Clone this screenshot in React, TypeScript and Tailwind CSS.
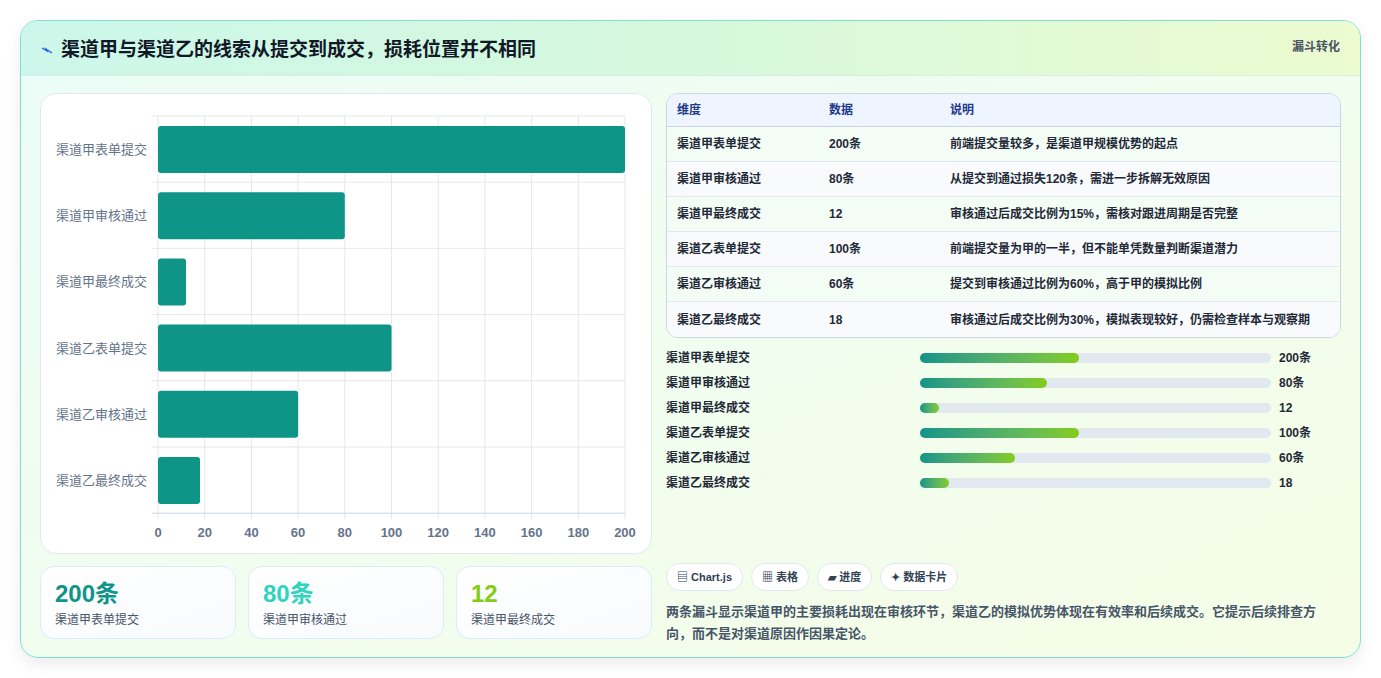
import React from "react";

const rows = [
  ["渠道甲表单提交", "200条", "前端提交量较多，是渠道甲规模优势的起点"],
  ["渠道甲审核通过", "80条", "从提交到通过损失120条，需进一步拆解无效原因"],
  ["渠道甲最终成交", "12", "审核通过后成交比例为15%，需核对跟进周期是否完整"],
  ["渠道乙表单提交", "100条", "前端提交量为甲的一半，但不能单凭数量判断渠道潜力"],
  ["渠道乙审核通过", "60条", "提交到审核通过比例为60%，高于甲的模拟比例"],
  ["渠道乙最终成交", "18", "审核通过后成交比例为30%，模拟表现较好，仍需检查样本与观察期"],
];
const vals = [200, 80, 12, 100, 60, 18];
const prog = [45.3, 36.2, 5.4, 45.3, 27, 8.2];

function Chart() {
  const x0 = 117, x1 = 584, y0 = 22, rh = 66.2;
  const sx = (v: number) => x0 + ((x1 - x0) * v) / 200;
  return (
    <svg width="611" height="460" className="block">
      {Array.from({ length: 11 }).map((_, i) => (
        <line key={i} x1={sx(i * 20)} x2={sx(i * 20)} y1={y0} y2={y0 + rh * 6 + 6} stroke="#e5e7eb" />
      ))}
      {Array.from({ length: 7 }).map((_, i) => (
        <line key={i} x1={x0 - 6} x2={x1} y1={y0 + rh * i} y2={y0 + rh * i} stroke={i === 6 ? "#cbd5e1" : "#e5e7eb"} />
      ))}
      {vals.map((v, i) => (
        <g key={i}>
          <rect x={x0} y={y0 + rh * i + 10} width={sx(v) - x0} height={47} rx={3} fill="#0f9488" />
          <text x={x0 - 11} y={y0 + rh * i + 38} textAnchor="end" fontSize="13" fill="#64748b" fontFamily="'Noto Sans CJK SC', sans-serif">{rows[i][0]}</text>
        </g>
      ))}
      {Array.from({ length: 11 }).map((_, i) => (
        <text key={i} x={sx(i * 20)} y={443} textAnchor="middle" fontSize="13" fontWeight="600" fill="#64748b" fontFamily="'Liberation Sans', sans-serif">{i * 20}</text>
      ))}
    </svg>
  );
}

export default function App() {
  return (
    <div className="w-[1381px] h-[678px] bg-white p-[20px] pb-[20px]" style={{ fontFamily: "'Liberation Sans','Noto Sans CJK SC',sans-serif" }}>
      <div className="w-[1341px] h-[638px] rounded-[18px] border border-[#7fe0cf] overflow-hidden bg-gradient-to-br from-[#ecfdf8] to-[#f5fde6] shadow-[0_6px_16px_rgba(0,0,0,0.08)] flex flex-col">
        <div className="h-[55px] flex items-start justify-between px-[20px] pt-[16px] bg-gradient-to-r from-[#ccf7ea] via-[#d6f8dc] to-[#ecfbd0] border-b border-[#d9efe6]">
          <div className="flex items-center gap-[8px]">
            <svg width="12" height="10" viewBox="0 0 12 10"><path d="M1 3 L6 6 L5 4 L11 8" stroke="#2563eb" strokeWidth="1.4" fill="none" /></svg>
            <h1 className="text-[19px] font-bold text-[#111827] leading-[26px]">渠道甲与渠道乙的线索从提交到成交，损耗位置并不相同</h1>
          </div>
          <span className="text-[12px] font-bold text-[#4b5563] mt-[1px]">漏斗转化</span>
        </div>
        <div className="flex gap-[14px] px-[19px] pt-[17px]">
          <div className="w-[612px] flex flex-col gap-[12px]">
            <div className="h-[461px] bg-white rounded-[16px] border border-[#e2e8f0]">
              <Chart />
            </div>
            <div className="flex gap-[12px]">
              {[["200条", "text-[#0f9488]"], ["80条", "text-[#2dd4bf]"], ["12", "text-[#84cc16]"]].map(([v, c], i) => (
                <div key={i} className="flex-1 h-[73px] rounded-[14px] border border-[#dbeafe] bg-gradient-to-br from-white to-[#f8fafc] px-[14px] pt-[12px]">
                  <div className={`text-[24px] font-bold leading-[30px] ${c}`}>{v}</div>
                  <div className="text-[12px] text-[#475569] mt-[2px]">{rows[i][0]}</div>
                </div>
              ))}
            </div>
          </div>
          <div className="w-[677px] flex flex-col">
            <div className="rounded-[12px] border border-[#cbd5e1] overflow-hidden bg-white text-[12px]">
              <div className="flex h-[33px] items-center bg-[#eef5ff] border-b border-[#cbd5e1] font-bold text-[#1e3a8a]">
                <div className="w-[162px] pl-[10px]">维度</div>
                <div className="w-[121px]">数据</div>
                <div>说明</div>
              </div>
              {rows.map((r, i) => (
                <div key={i} className={`flex h-[35px] items-center font-semibold text-[#1f2937] ${i < 5 ? "border-b border-[#e2e8f0]" : ""} ${i % 2 ? "bg-[#f8fafc]" : "bg-[#f4fcf6]"}`}>
                  <div className="w-[162px] pl-[10px]">{r[0]}</div>
                  <div className="w-[121px]">{r[1]}</div>
                  <div>{r[2]}</div>
                </div>
              ))}
            </div>
            <div className="flex flex-col mt-[7px]">
              {rows.map((r, i) => (
                <div key={i} className="flex items-center h-[25px] text-[12px] font-semibold text-[#1f2937]">
                  <div className="w-[254px]">{r[0]}</div>
                  <div className="w-[351px] h-[10px] rounded-full bg-[#e2e8f0]">
                    <div className="h-full rounded-full bg-gradient-to-r from-[#0f9488] to-[#84cc16]" style={{ width: `${prog[i]}%` }} />
                  </div>
                  <div className="ml-[8px] font-bold">{r[1]}</div>
                </div>
              ))}
            </div>
            <div className="flex gap-[8px] mt-[68px]">
              {["▤ Chart.js", "▦ 表格", "▰ 进度", "✦ 数据卡片"].map((t) => (
                <span key={t} className="h-[28px] px-[10px] flex items-center rounded-full bg-white border border-[#e2e8f0] text-[11px] font-bold text-[#334155]">{t}</span>
              ))}
            </div>
            <p className="mt-[10px] text-[13px] leading-[22px] text-[#475569] font-semibold">两条漏斗显示渠道甲的主要损耗出现在审核环节，渠道乙的模拟优势体现在有效率和后续成交。它提示后续排查方向，而不是对渠道原因作因果定论。</p>
          </div>
        </div>
      </div>
    </div>
  );
}
